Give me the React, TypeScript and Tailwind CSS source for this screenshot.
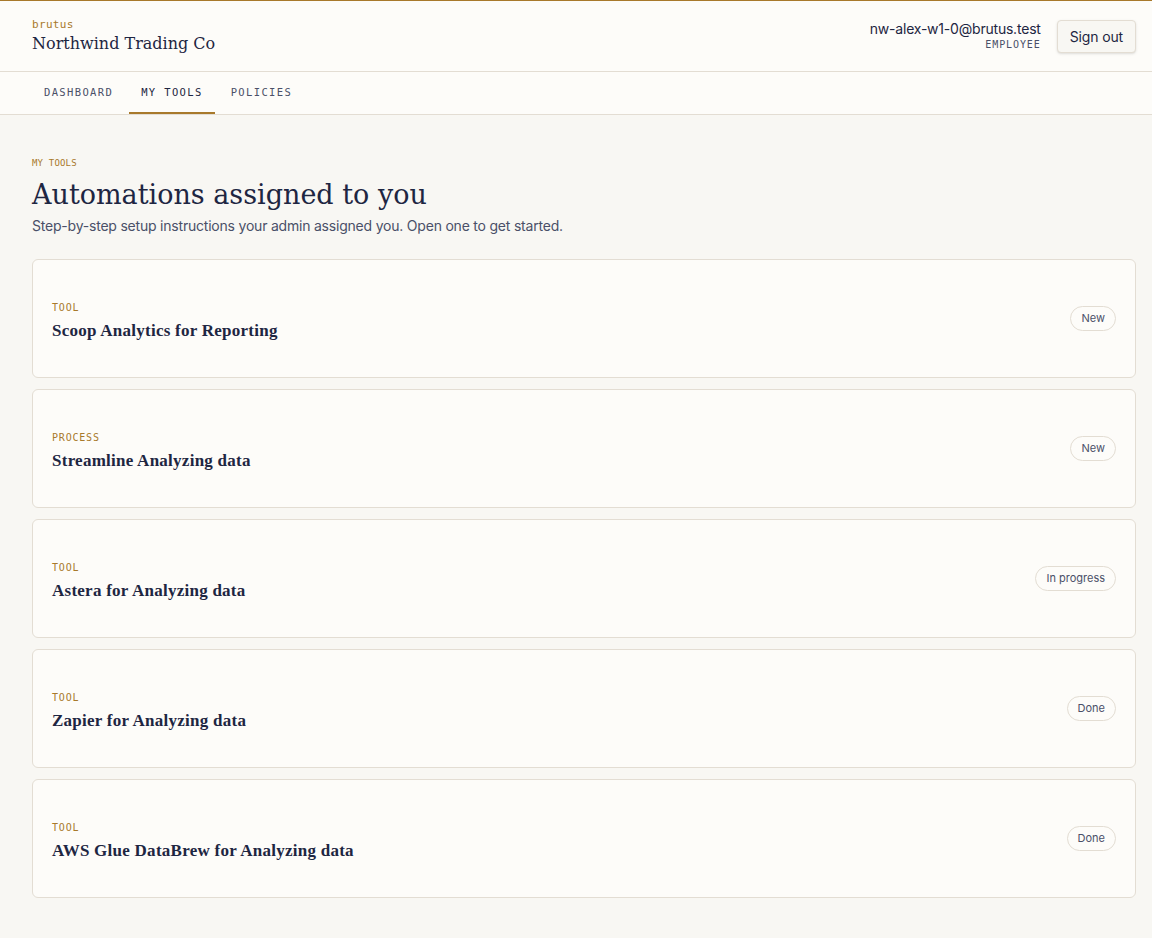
import React from "react";

const serif = { fontFamily: '"DejaVu Serif", "Liberation Serif", serif' };
const titleSerif = { fontFamily: '"Liberation Serif", "DejaVu Serif", serif' };
const sans = "font-['Inter','Noto_Sans',sans-serif]";
const mono = "font-['DejaVu_Sans_Mono','Liberation_Mono',monospace]";

const items = [
  { kind: "TOOL", title: "Scoop Analytics for Reporting", status: "New" },
  { kind: "PROCESS", title: "Streamline Analyzing data", status: "New" },
  { kind: "TOOL", title: "Astera for Analyzing data", status: "In progress" },
  { kind: "TOOL", title: "Zapier for Analyzing data", status: "Done" },
  { kind: "TOOL", title: "AWS Glue DataBrew for Analyzing data", status: "Done" },
];

export default function App() {
  return (
    <div className={`min-h-[938px] bg-[#f8f7f3] ${sans} text-[#1e2642]`}>
      <header className="bg-[#fdfcf9] border-t border-[#a8792b] border-b border-b-[#e3ddd3]">
        <div className="flex items-center justify-between pl-8 pr-4 h-[70px]">
          <div className="flex flex-col pt-[2px]">
            <span className={`${mono} text-[11px] leading-[14px] tracking-[0.03em] text-[#a8792b]`}>brutus</span>
            <span style={serif} className="text-[16px] leading-[24px] text-[#1e2642]">Northwind Trading Co</span>
          </div>
          <div className="flex items-center gap-4">
            <div className="flex flex-col items-end">
              <span className="text-[14px] leading-[18px] tracking-[-0.015em] text-[#1e2642]">nw-alex-w1-0@brutus.test</span>
              <span className={`${mono} text-[10px] leading-[14px] tracking-[0.09em] text-[#4a5068]`}>EMPLOYEE</span>
            </div>
            <button className="h-[33px] px-3 rounded-[4px] border border-[#e3ddd3] bg-[#f8f7f3] shadow-sm text-[14px] tracking-[-0.01em] text-[#1e2642]">
              Sign out
            </button>
          </div>
        </div>
      </header>
      <nav className="bg-[#fdfcf9] border-b border-[#e3ddd3] pl-8 flex gap-1 h-[43px]">
        {["DASHBOARD", "MY TOOLS", "POLICIES"].map((t) => {
          const active = t === "MY TOOLS";
          return (
            <div
              key={t}
              className={`${mono} px-3 pt-[2px] flex items-center text-[10.5px] tracking-[0.13em] border-b-2 ${
                active ? "border-[#a8792b] text-[#1e2642]" : "border-transparent text-[#4a5068]"
              }`}
            >
              {t}
            </div>
          );
        })}
      </nav>
      <main className="pl-8 pr-4 pt-[41px] pb-10">
        <div className={`${mono} text-[9px] leading-[14px] tracking-[0.02em] text-[#a8792b]`}>MY TOOLS</div>
        <h1 style={serif} className="text-[27px] leading-[38px] mt-[6px] text-[#1e2642]">Automations assigned to you</h1>
        <p className="text-[14px] leading-[20px] mt-[2px] tracking-[-0.015em] text-[#4a5068]">
          Step-by-step setup instructions your admin assigned you. Open one to get started.
        </p>
        <div className="mt-[23px] flex flex-col gap-[11px]">
          {items.map((it) => (
            <div
              key={it.title}
              className="h-[119px] rounded-[6px] border border-[#e3ddd3] bg-[#fdfcf9] pl-[19px] pr-[19px] flex items-center justify-between"
            >
              <div className="flex flex-col pt-[6px]">
                <span className={`${mono} text-[10px] leading-[14px] tracking-[0.08em] text-[#a8792b]`}>{it.kind}</span>
                <span style={titleSerif} className="mt-[5px] text-[17px] leading-[22px] font-bold tracking-[0.015em] text-[#1e2642]">{it.title}</span>
              </div>
              <span className="h-[25px] px-[10px] flex items-center rounded-full border border-[#e3ddd3] text-[11px] text-[#4a5068]">
                {it.status}
              </span>
            </div>
          ))}
        </div>
      </main>
    </div>
  );
}
